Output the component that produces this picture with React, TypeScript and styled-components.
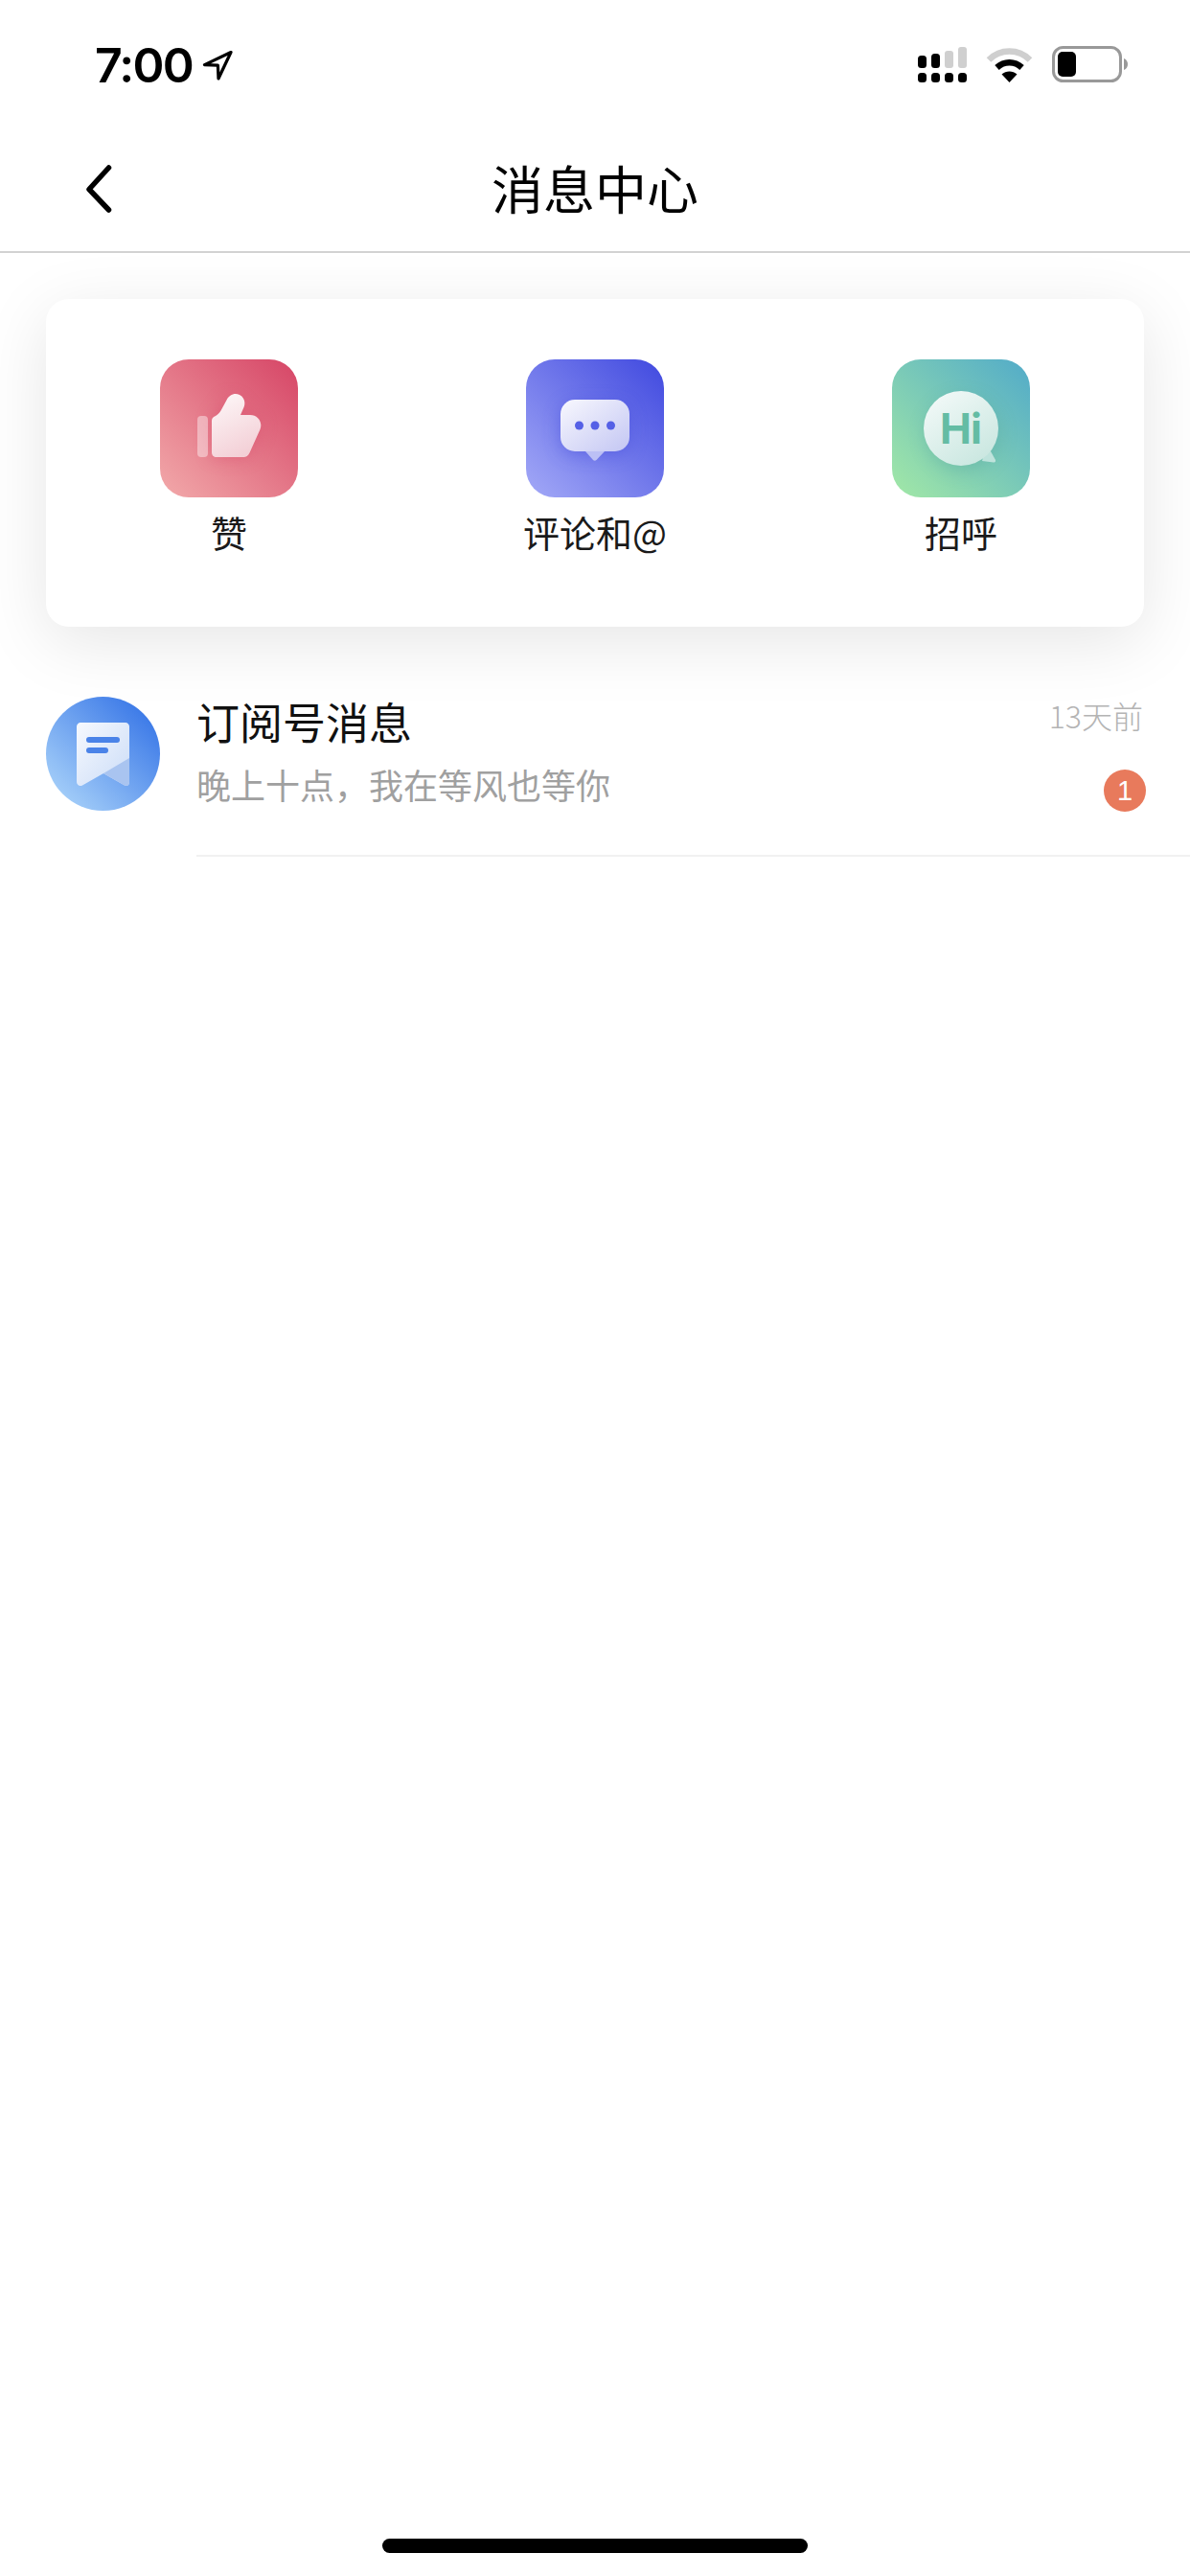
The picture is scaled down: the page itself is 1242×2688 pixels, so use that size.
import React from "react";
import styled, { createGlobalStyle } from "styled-components";

const CJK = `"Noto Sans CJK SC", "Noto Sans", sans-serif`;

const GlobalStyle = createGlobalStyle`
  html, body {
    margin: 0;
    padding: 0;
    background: #ffffff;
  }
  * {
    box-sizing: border-box;
  }
`;

const Page = styled.div`
  width: 1242px;
  height: 2688px;
  display: flex;
  flex-direction: column;
  background: #ffffff;
  overflow: hidden;
  font-family: ${CJK};
`;

const StatusBar = styled.div`
  height: 136px;
  flex: none;
  padding: 41px 65px 0 99px;
  display: flex;
  justify-content: space-between;
  align-items: flex-start;
`;

const TimeGroup = styled.div`
  display: flex;
  align-items: center;
  gap: 10px;
`;

const Time = styled.span`
  font-family: Inter, "Liberation Sans", sans-serif;
  font-size: 50px;
  line-height: 54px;
  font-weight: 600;
  letter-spacing: -1.8px;
  color: #000;
`;

const StatusIcons = styled.div`
  display: flex;
  align-items: center;
  gap: 20px;
  padding-top: 7px;
`;

const NavBar = styled.div`
  height: 128px;
  flex: none;
  position: relative;
  display: flex;
  align-items: center;
  justify-content: center;
  padding-bottom: 6px;
  background: #ffffff;
  border-bottom: 2px solid #d2d2d2;
`;

const BackIcon = styled.svg`
  position: absolute;
  left: 87px;
  top: 34px;
`;

const NavTitle = styled.h1`
  margin: 0;
  font-size: 54px;
  line-height: 72px;
  font-weight: 400;
  color: #000;
`;

const Card = styled.div`
  margin: 48px 48px 0;
  height: 342px;
  flex: none;
  padding-top: 63px;
  display: grid;
  grid-template-columns: repeat(3, 1fr);
  align-items: start;
  background: #ffffff;
  border-radius: 24px;
  box-shadow: 0 16px 70px rgba(0, 0, 0, 0.1);
`;

const Shortcut = styled.div`
  display: flex;
  flex-direction: column;
  align-items: center;
  gap: 12px;
`;

const ShortcutIcon = styled.svg`
  display: block;
  border-radius: 30px;
`;

const ShortcutLabel = styled.span`
  font-size: 38px;
  line-height: 48px;
  font-weight: 400;
  color: #1a1a1a;
`;

const MessageRow = styled.div`
  margin-top: 73px;
  padding-left: 48px;
  display: flex;
  gap: 38px;
  align-items: flex-start;
  position: relative;
`;

const Avatar = styled.svg`
  display: block;
  flex: none;
  border-radius: 50%;
`;

const MessageBody = styled.div`
  flex: 1;
  height: 167px;
  padding-right: 47px;
  display: grid;
  grid-template-columns: 1fr auto;
  grid-template-rows: 60px 56px;
  align-content: start;
  border-bottom: 2px solid #f1f1f1;
`;

const MessageTitle = styled.span`
  font-size: 45px;
  line-height: 60px;
  font-weight: 400;
  color: #111111;
  margin-top: -4px;
`;

const MessageTime = styled.span`
  font-family: ${CJK};
  font-size: 32px;
  line-height: 44px;
  font-weight: 300;
  color: #b4b4b4;
  margin-top: -3px;
  margin-right: 2px;
`;

const MessagePreview = styled.span`
  font-size: 36px;
  line-height: 48px;
  font-weight: 400;
  color: #a0a0a0;
  margin-top: 7px;
`;

const Badge = styled.span`
  width: 44px;
  height: 44px;
  margin-top: 16px;
  margin-right: -1px;
  justify-self: end;
  display: flex;
  align-items: center;
  justify-content: center;
  border-radius: 50%;
  background: #e87a5c;
  color: #ffffff;
  font-family: "Liberation Sans", sans-serif;
  font-size: 29px;
  line-height: 1;
`;

const HomeBar = styled.div`
  margin: auto auto 24px;
  width: 444px;
  height: 15px;
  flex: none;
  border-radius: 8px;
  background: #000000;
`;

const LocationArrow = () => (
  <svg width="32" height="32" viewBox="0 0 32 32" fill="none">
    <path
      d="M30 2.5 2.5 15.6 16.4 16.2 17 30Z"
      stroke="#000"
      strokeWidth="3.2"
      strokeLinejoin="round"
    />
  </svg>
);

const SignalIcon = () => (
  <svg width="51" height="37" viewBox="0 0 51 37" fill="#000">
    <rect x="0" y="27" width="9" height="10" rx="3.5" />
    <rect x="14" y="27" width="9" height="10" rx="3.5" />
    <rect x="28" y="27" width="9" height="10" rx="3.5" />
    <rect x="42" y="27" width="9" height="10" rx="3.5" />
    <rect x="0" y="9" width="9" height="13" rx="3.5" />
    <rect x="14" y="7" width="9" height="15" rx="3.5" />
    <rect x="28" y="4" width="9" height="18" rx="3" fill="#cfcfcf" />
    <rect x="42" y="0" width="9" height="22" rx="3" fill="#cfcfcf" />
  </svg>
);

const WifiIcon = () => (
  <svg width="49" height="37" viewBox="0 0 49 37" fill="none">
    <path d="M3 13.5C15 1.5 34 1.5 46 13.5" stroke="#cfcfcf" strokeWidth="6.5" />
    <path d="M11.5 21.5C19 14.5 30 14.5 37.5 21.5" stroke="#000" strokeWidth="6.5" />
    <path d="M16.5 28.5C21 24.5 28 24.5 32.5 28.5L24.5 37Z" fill="#000" />
  </svg>
);

const BatteryIcon = () => (
  <svg width="79" height="38" viewBox="0 0 79 38" fill="none">
    <rect x="1.5" y="1.5" width="70" height="35" rx="10" stroke="#999" strokeWidth="3" />
    <rect x="6" y="6" width="19" height="26" rx="5" fill="#000" />
    <path d="M75 13C78 14 79 17 79 19C79 21 78 24 75 25Z" fill="#999" />
  </svg>
);

const LikeGlyph = () => (
  <ShortcutIcon width="144" height="144" viewBox="0 0 144 144">
    <defs>
      <linearGradient id="likeBg" x1="1" y1="0" x2="0" y2="1">
        <stop offset="0" stopColor="#d64566" />
        <stop offset="1" stopColor="#f2a9aa" />
      </linearGradient>
      <linearGradient id="likeFg" x1="0.2" y1="0" x2="0.6" y2="1">
        <stop offset="0" stopColor="#fdf6f7" />
        <stop offset="1" stopColor="#f3cfd6" />
      </linearGradient>
      <filter id="likeSh" x="-50%" y="-50%" width="200%" height="200%">
        <feGaussianBlur stdDeviation="9" />
      </filter>
    </defs>
    <rect width="144" height="144" fill="url(#likeBg)" />
    <path d="M54 66 72 40 88 50 84 58H96L106 68 92 102H58L54 98Z" fill="#d9506e" opacity="0.55" filter="url(#likeSh)" />
    <rect x="39" y="59" width="11" height="43" rx="4" fill="#fff" opacity="0.42" />
    <path
      d="M54 64C54 61 56 60 58 59C60 58 62 56 63.5 53.5L69.5 42.5C72 37 78 34.5 83 37C88 39.5 89.5 45 87.5 50L84 58H94C102 58 107.5 65.5 104.5 73L93.5 97.5C92 100.5 90 102 87 102H59C56 102 54 100 54 97Z"
      fill="url(#likeFg)"
    />
  </ShortcutIcon>
);

const CommentGlyph = () => (
  <ShortcutIcon width="144" height="144" viewBox="0 0 144 144">
    <defs>
      <linearGradient id="commentBg" x1="1" y1="0" x2="0" y2="1">
        <stop offset="0" stopColor="#4049df" />
        <stop offset="1" stopColor="#a3a9f7" />
      </linearGradient>
      <linearGradient id="commentFg" x1="0" y1="0" x2="1" y2="1">
        <stop offset="0" stopColor="#f8f8fe" />
        <stop offset="1" stopColor="#c3c6f3" />
      </linearGradient>
      <filter id="commentSh" x="-50%" y="-50%" width="200%" height="200%">
        <feGaussianBlur stdDeviation="9" />
      </filter>
    </defs>
    <rect width="144" height="144" fill="url(#commentBg)" />
    <rect x="36" y="46" width="72" height="54" rx="15" fill="#4650dc" opacity="0.5" filter="url(#commentSh)" />
    <path d="M62 96H82L73.5 105C72.5 106 71 106 70 105Z" fill="#bcc0f5" />
    <rect x="36" y="42" width="72" height="54" rx="15" fill="url(#commentFg)" />
    <circle cx="55.5" cy="69" r="4.5" fill="#5560e6" />
    <circle cx="72" cy="69" r="4.5" fill="#5560e6" />
    <circle cx="88.5" cy="69" r="4.5" fill="#5560e6" />
  </ShortcutIcon>
);

const HiGlyph = () => (
  <ShortcutIcon width="144" height="144" viewBox="0 0 144 144">
    <defs>
      <linearGradient id="hiBg" x1="1" y1="0" x2="0" y2="1">
        <stop offset="0" stopColor="#52abc9" />
        <stop offset="1" stopColor="#a2e8a6" />
      </linearGradient>
      <linearGradient id="hiFg" x1="0.1" y1="0" x2="0.8" y2="1">
        <stop offset="0" stopColor="#f4faf9" />
        <stop offset="1" stopColor="#c8e6df" />
      </linearGradient>
      <filter id="hiSh" x="-50%" y="-50%" width="200%" height="200%">
        <feGaussianBlur stdDeviation="9" />
      </filter>
    </defs>
    <rect width="144" height="144" fill="url(#hiBg)" />
    <circle cx="74" cy="78" r="39" fill="#5aa9a0" opacity="0.45" filter="url(#hiSh)" />
    <path d="M98 92 103 96 108 105C108.5 107 107 107.5 106 107.5L94 106Z" fill="#bfe3dc" />
    <circle cx="72" cy="72" r="39" fill="url(#hiFg)" />
    <text
      x="71.5"
      y="88"
      textAnchor="middle"
      fontFamily="Inter, sans-serif"
      fontWeight="700"
      fontSize="44"
      letterSpacing="-1"
      fill="#64bca4"
    >
      Hi
    </text>
  </ShortcutIcon>
);

const BookmarkAvatar = () => (
  <Avatar width="119" height="119" viewBox="0 0 119 119">
    <defs>
      <linearGradient id="avatarBg" x1="0.85" y1="0.15" x2="0.1" y2="0.9">
        <stop offset="0" stopColor="#3f7ce8" />
        <stop offset="1" stopColor="#a6d0f9" />
      </linearGradient>
      <linearGradient id="avatarFg" x1="0" y1="0" x2="1" y2="1">
        <stop offset="0" stopColor="#f6f9fe" />
        <stop offset="1" stopColor="#cbdcf7" />
      </linearGradient>
    </defs>
    <rect width="119" height="119" fill="url(#avatarBg)" />
    <path
      d="M32 31C32 29 34 27 36 27H83C85 27 87 29 87 31V89C87 93 84 94 81 92L60 80 38 92.5C35 94 32 92 32 89Z"
      fill="url(#avatarFg)"
    />
    <path d="M87 64V89C87 93 84 94 81 92L60 80Z" fill="#a9c4f0" />
    <rect x="42" y="42" width="35" height="6" rx="3" fill="#4a83e8" />
    <rect x="42" y="53" width="23" height="6" rx="3" fill="#4a83e8" />
  </Avatar>
);

export default function App() {
  return (
    <>
      <GlobalStyle />
      <Page>
        <StatusBar>
          <TimeGroup>
            <Time>7:00</Time>
            <LocationArrow />
          </TimeGroup>
          <StatusIcons>
            <SignalIcon />
            <WifiIcon />
            <BatteryIcon />
          </StatusIcons>
        </StatusBar>
        <NavBar>
          <BackIcon width="32" height="52" viewBox="0 0 32 52" fill="none">
            <path
              d="M26.5 5 6 27.5 26.5 49"
              stroke="#000"
              strokeWidth="5.5"
              strokeLinecap="round"
              strokeLinejoin="round"
            />
          </BackIcon>
          <NavTitle>消息中心</NavTitle>
        </NavBar>
        <Card>
          <Shortcut>
            <LikeGlyph />
            <ShortcutLabel>赞</ShortcutLabel>
          </Shortcut>
          <Shortcut>
            <CommentGlyph />
            <ShortcutLabel>评论和@</ShortcutLabel>
          </Shortcut>
          <Shortcut>
            <HiGlyph />
            <ShortcutLabel>招呼</ShortcutLabel>
          </Shortcut>
        </Card>
        <MessageRow>
          <BookmarkAvatar />
          <MessageBody>
            <MessageTitle>订阅号消息</MessageTitle>
            <MessageTime>13天前</MessageTime>
            <MessagePreview>晚上十点，我在等风也等你</MessagePreview>
            <Badge>1</Badge>
          </MessageBody>
        </MessageRow>
        <HomeBar />
      </Page>
    </>
  );
}
